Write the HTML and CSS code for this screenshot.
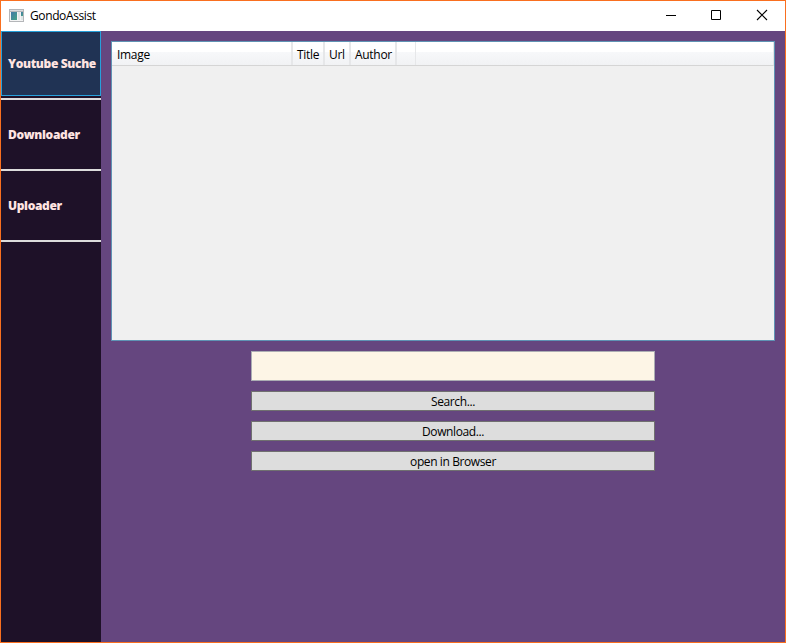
FILE: index.html
```html
<!DOCTYPE html>
<html lang="en">
<head>
<meta charset="utf-8">
<title>GondoAssist</title>
<link rel="stylesheet" href="styles.css">
</head>
<body>
<div class="window">
  <header class="titlebar">
    <svg class="app-icon" width="16" height="14" viewBox="0 0 16 14" shape-rendering="crispEdges">
      <defs><linearGradient id="pane" x1="0" y1="0" x2="1" y2="1"><stop offset="0" stop-color="#4179a8"/><stop offset="1" stop-color="#47a386"/></linearGradient></defs>
      <path fill="#b4b6b9" d="M0 0h15v13H0z"/>
      <path fill="#dcdde0" d="M1 1h13v1H1z"/>
      <path fill="#f4f4f4" d="M1 3h13v9H1z"/>
      <path fill="url(#pane)" d="M2 3h6v8H2z"/>
      <path fill="#e3e6e8" d="M9 3h2v8H9z"/>
      <path fill="#dde6e6" d="M12 3h2v8h-2z"/>
      <path fill="url(#pane)" d="M12 3h2v4h-2z"/>
    </svg>
    <span class="title">GondoAssist</span>
    <div class="controls">
      <svg width="46" height="30" viewBox="0 0 46 30"><path fill="#000" d="M19 14h10v1H19z"/></svg>
      <svg width="46" height="30" viewBox="0 0 46 30"><path fill="none" stroke="#000" d="M18.500 9.500h9v9h-9z"/></svg>
      <svg width="46" height="30" viewBox="0 0 46 30"><path fill="none" stroke="#000" stroke-width="1.1" d="M18 9l10 10M28 9L18 19"/></svg>
    </div>
  </header>
  <div class="body">
    <nav class="sidebar">
      <div class="tab selected"><span>Youtube Suche</span></div>
      <div class="tab"><span>Downloader</span></div>
      <div class="tab"><span>Uploader</span></div>
    </nav>
    <main class="content">
      <div class="list">
        <div class="list-header">
          <div class="col image"><span>Image</span></div>
          <div class="col name"><span>Title</span></div>
          <div class="col url"><span>Url</span></div>
          <div class="col author"><span>Author</span></div>
          <div class="col blank"></div>
        </div>
      </div>
      <div class="form">
        <input class="query" type="text" aria-label="Search">
        <button>Search...</button>
        <button>Download...</button>
        <button>open in Browser</button>
      </div>
    </main>
  </div>
</div>
</body>
</html>
```
FILE: styles.css
```css
* { box-sizing: border-box; }
body {
  margin: 0;
  font: 12px/16px "Open Sans", "Noto Sans", sans-serif;
  color: #000;
}
.window {
  display: flex;
  flex-direction: column;
  width: 786px;
  height: 643px;
  border: 1px solid #f96f1f;
  background: #65467f;
}
.titlebar {
  display: flex;
  align-items: center;
  height: 30px;
  flex: none;
  padding-left: 8px;
  background: #fff;
}
.app-icon { margin-bottom: 1px; }
.title { margin-left: 5px; letter-spacing: -0.38px; }
.controls { display: flex; margin-left: auto; }
.body { display: flex; flex: 1; }
.sidebar { width: 100px; background: #1e1128; }
.tab {
  display: flex;
  align-items: center;
  height: 71px;
  padding-left: 7px;
  border-bottom: 2px solid #dcdcdc;
  color: #ffe4e1;
  font-weight: 800;
  letter-spacing: -0.34px;
  white-space: nowrap;
}
.tab.selected { height: 69px; padding: 0; align-items: flex-start; }
.selected span {
  display: flex;
  align-items: center;
  width: 100px;
  height: 65px;
  padding-left: 6px;
  border: 1px solid #26a0da;
  background: #203354;
}
.content { flex: 1; padding: 10px; }
.list {
  width: 664px;
  height: 300px;
  border: 1px solid #5f93b4;
  background: #f0f0f0;
}
.list-header {
  display: flex;
  height: 24px;
  border-right: 1px solid #e3e4e6;
  border-bottom: 1px solid #d5d5d5;
  background: linear-gradient(#fff 0 42%, #f7f8fa 44%, #f1f2f4 100%);
}
.col {
  display: flex;
  align-items: center;
  padding: 3px 0 0 4px;
  border-right: 2px solid #e6e7e9;
  letter-spacing: -0.3px;
}
.image { width: 181px; padding-left: 5px; }
.name { width: 32px; }
.url { width: 26px; }
.author { width: 46px; }
.blank { width: 19px; border-right-width: 1px; }
.form {
  display: flex;
  flex-direction: column;
  gap: 10px;
  width: 404px;
  margin: 10px 0 0 140px;
}
.query {
  height: 30px;
  padding: 0 4px;
  border: 1px solid #abadb3;
  background: #fdf5e6;
}
button {
  display: flex;
  align-items: center;
  justify-content: center;
  height: 20px;
  padding: 2px 0 0;
  border: 1px solid #707070;
  background: #ddd;
  color: #000;
  font: inherit;
  letter-spacing: -0.4px;
}
```
